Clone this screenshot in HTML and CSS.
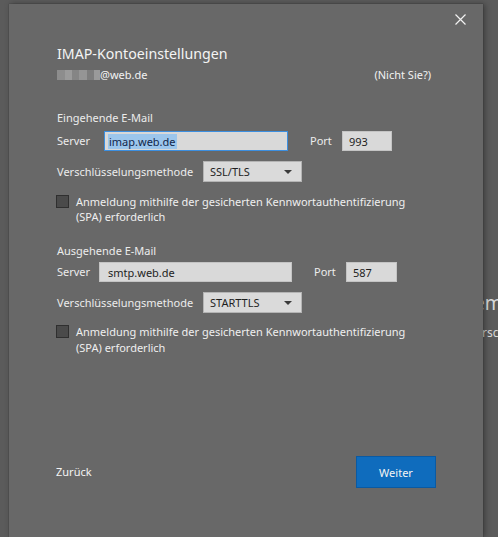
FILE: index.html
```html
<!DOCTYPE html>
<html lang="de">
<head>
<meta charset="utf-8">
<title>IMAP-Kontoeinstellungen</title>
<link rel="stylesheet" href="styles.css">
</head>
<body>
<div class="backdrop-text">
  <div class="bt-big">em</div>
  <div class="bt-small">rsc</div>
</div>
<div class="page">
  <div class="dialog">
    <div class="close-row">
      <button class="close" aria-label="Schließen">
        <svg width="11" height="11" viewBox="0 0 11 11"><path d="M0.5 0.5 L10.5 10.5 M10.5 0.5 L0.5 10.5" stroke="#f2f2f2" stroke-width="1.2" fill="none"/></svg>
      </button>
    </div>
    <div class="content">
      <h1 class="title">IMAP-Kontoeinstellungen</h1>
      <div class="account">
        <span class="mail"><span class="pixels"><i class="p1"></i><i class="p2"></i><i class="p3"></i><i class="p4"></i><i class="p5"></i><i class="p6"></i></span>@web.de</span>
        <span class="notyou">(Nicht Sie?)</span>
      </div>

      <div class="section-title first">Eingehende E-Mail</div>
      <div class="row server-row in">
        <span class="lbl srv-lbl">Server</span>
        <span class="field server focused"><span class="sel">imap.web.de</span></span>
        <span class="lbl port-lbl">Port</span>
        <span class="field port">993</span>
      </div>
      <div class="row enc-row">
        <span class="lbl enc-lbl">Verschlüsselungsmethode</span>
        <span class="select"><span>SSL/TLS</span><svg width="8" height="4" viewBox="0 0 8 4"><path d="M0 0 H8 L4 4 Z" fill="#3a3a3a"/></svg></span>
      </div>
      <label class="check">
        <span class="box"></span>
        <span class="check-text">Anmeldung mithilfe der gesicherten Kennwortauthentifizierung<br>(SPA) erforderlich</span>
      </label>

      <div class="section-title second">Ausgehende E-Mail</div>
      <div class="row server-row out">
        <span class="lbl srv-lbl">Server</span>
        <span class="field server">smtp.web.de</span>
        <span class="lbl port-lbl">Port</span>
        <span class="field port">587</span>
      </div>
      <div class="row enc-row">
        <span class="lbl enc-lbl">Verschlüsselungsmethode</span>
        <span class="select"><span>STARTTLS</span><svg width="8" height="4" viewBox="0 0 8 4"><path d="M0 0 H8 L4 4 Z" fill="#3a3a3a"/></svg></span>
      </div>
      <label class="check check-out">
        <span class="box"></span>
        <span class="check-text">Anmeldung mithilfe der gesicherten Kennwortauthentifizierung<br>(SPA) erforderlich</span>
      </label>
    </div>
    <div class="footer">
      <span class="back">Zurück</span>
      <button class="next">Weiter</button>
    </div>
  </div>
</div>
</body>
</html>
```
FILE: styles.css
```css
html, body {
  margin: 0;
  padding: 0;
}
body {
  background: #5b5b5b;
  font-family: "Noto Sans", "Open Sans", sans-serif;
  color: #f2f2f2;
  width: 498px;
  height: 537px;
  overflow: hidden;
  position: relative;
}
.backdrop-text {
  position: absolute;
  left: 474px;
  top: 0;
  color: #d8d8d8;
}
.bt-big {
  margin-top: 292px;
  font-size: 19px;
  line-height: 22px;
}
.bt-small {
  margin-top: 11px;
  font-size: 12px;
  line-height: 16px;
  margin-left: 8px;
}
.page {
  position: relative;
  padding: 4px 0 0 9px;
}
.dialog {
  width: 474px;
  height: 533px;
  background: #686868;
  box-shadow: 2px 0 6px rgba(0, 0, 0, 0.35), 0 0 1px rgba(0,0,0,0.4);
  box-sizing: border-box;
}
.close-row {
  height: 30px;
  display: flex;
  justify-content: flex-end;
  align-items: center;
  padding-right: 17px;
}
.close {
  background: none;
  border: 0;
  padding: 0;
  width: 11px;
  height: 11px;
  display: flex;
}
.content {
  padding-left: 48px;
  padding-right: 51px;
}
.title {
  margin: 10px 0 0;
  font-weight: 400;
  font-size: 14.2px;
  line-height: 20px;
  color: #f4f4f4;
}
.account {
  margin-top: 3px;
  display: flex;
  justify-content: space-between;
  font-size: 11px;
  line-height: 16px;
}
.mail {
  display: flex;
  align-items: center;
}
.pixels {
  display: flex;
  height: 10px;
  width: 43px;
}
.pixels i {
  display: block;
  height: 10px;
}
.pixels .p1 { width: 8px; background: #8d8d8d; }
.pixels .p2 { width: 7px; background: #9b9b9b; }
.pixels .p3 { width: 7px; background: #858585; }
.pixels .p4 { width: 8px; background: #959595; }
.pixels .p5 { width: 7px; background: #7d7d7d; }
.pixels .p6 { width: 6px; background: #9a9a9a; }
.notyou {
  margin-right: 1px;
}
.section-title {
  font-size: 11px;
  line-height: 16px;
  color: #ececec;
}
.section-title.first { margin-top: 27px; }
.section-title.second { margin-top: 19px; }
.row {
  display: flex;
  align-items: center;
  font-size: 11px;
}
.lbl {
  color: #ececec;
  line-height: 16px;
  flex: none;
}
.server-row {
  height: 20px;
}
.server-row.in { margin-top: 5px; }
.server-row.out { margin-top: 3px; }
.field {
  box-sizing: border-box;
  height: 20px;
  background: #d9d9d9;
  border: 1px solid #c4c4c4;
  color: #1e1e1e;
  display: flex;
  align-items: center;
  padding-left: 6px;
  font-size: 11px;
}
.in .srv-lbl { width: 47px; }
.in .server { width: 184px; padding-left: 3px; }
.in .port-lbl { margin-left: 22px; width: 32px; }
.in .port { width: 50px; }
.out .srv-lbl { width: 42px; }
.out .server { width: 193px; padding-left: 8px; }
.out .port-lbl { margin-left: 22px; width: 32px; }
.out .port { width: 51px; }
.field.focused {
  border-color: #3c8fe0;
}
.sel {
  background: #9cc6ec;
  color: #11254a;
  line-height: 15px;
  padding: 0 1px;
}
.enc-row {
  margin-top: 10px;
  height: 21px;
}
.enc-lbl { width: 146px; }
.select {
  box-sizing: border-box;
  width: 99px;
  height: 21px;
  background: #dadada;
  border: 1px solid #b4b4b4;
  color: #1e1e1e;
  display: flex;
  align-items: center;
  justify-content: space-between;
  padding: 0 9px 0 6px;
  font-size: 11px;
}
.check {
  margin-top: 12px;
  display: flex;
  align-items: flex-start;
  font-size: 11px;
  line-height: 15px;
  color: #efefef;
}
.check-out { margin-top: 11px; line-height: 15.5px; }
.box {
  box-sizing: border-box;
  width: 13px;
  height: 13px;
  margin: 1px 7px 0 -1px;
  background: #4a4a4a;
  border: 1px solid #2f2f2f;
  flex: none;
}
.footer {
  margin-top: 101px;
  padding: 0 47px 0 47px;
  display: flex;
  justify-content: space-between;
  align-items: center;
}
.back {
  font-size: 11px;
  line-height: 16px;
  color: #f4f4f4;
}
.next {
  box-sizing: border-box;
  width: 80px;
  height: 32px;
  background: #0f6cbd;
  border: 1px solid #0a5aa3;
  color: #f4f4f4;
  font-family: "Noto Sans", "Open Sans", sans-serif;
  font-size: 11px;
  padding: 0;
}
```
